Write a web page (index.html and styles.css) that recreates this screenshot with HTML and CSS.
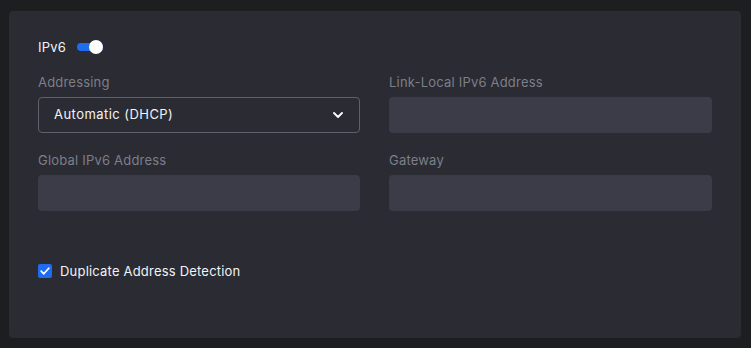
FILE: index.html
```html
<!DOCTYPE html>
<html lang="en">
<head>
  <meta charset="UTF-8">
  <title>IPv6 Settings</title>
  <link rel="stylesheet" href="styles.css">
</head>
<body>
  <div class="panel">
    <div class="switch-row">
      <span class="switch-label">IPv6</span>
      <span class="toggle on"><span class="knob"></span></span>
    </div>

    <div class="fields">
      <div class="field">
        <label>Addressing</label>
        <div class="select">
          <span class="select-value">Automatic (DHCP)</span>
          <svg class="chevron" width="10" height="6" viewBox="0 0 10 6">
            <path d="M1 1l4 4 4-4" fill="none" stroke="#fff" stroke-width="1.8" stroke-linecap="round" stroke-linejoin="round"/>
          </svg>
        </div>
      </div>
      <div class="field">
        <label>Link-Local IPv6 Address</label>
        <div class="input"></div>
      </div>
      <div class="field">
        <label>Global IPv6 Address</label>
        <div class="input"></div>
      </div>
      <div class="field">
        <label>Gateway</label>
        <div class="input"></div>
      </div>
    </div>

    <div class="check-row">
      <span class="checkbox">
        <svg width="10" height="8" viewBox="0 0 10 8">
          <path d="M1.2 4.2l2.6 2.6L8.8 1.2" fill="none" stroke="#fff" stroke-width="1.7" stroke-linecap="round" stroke-linejoin="round"/>
        </svg>
      </span>
      <span class="check-label">Duplicate Address Detection</span>
    </div>
  </div>
</body>
</html>
```

FILE: styles.css
```css
body {
  margin: 0;
  height: 348px;
  background-color: #1d1e20;
  font-family: 'Inter', sans-serif;
  font-size: 13px;
  letter-spacing: 0.2px;
  color: #f2f3f5;
  padding: 11px 10px 10px 9px;
  box-sizing: border-box;
}

.panel {
  background-color: #2a2b33;
  border-radius: 4px;
  height: 327px;
  width: 732px;
  box-sizing: border-box;
  padding: 26px 29px 0 29px;
}

.switch-row {
  display: flex;
  align-items: center;
  height: 20px;
  gap: 11px;
}

.toggle {
  position: relative;
  width: 26px;
  height: 8px;
  border-radius: 4px;
  background-color: #1f6cf0;
}

.toggle .knob {
  position: absolute;
  right: 0;
  top: -3px;
  width: 14px;
  height: 14px;
  border-radius: 50%;
  background-color: #fff;
}

.fields {
  display: grid;
  grid-template-columns: 322px 323px;
  column-gap: 29px;
  row-gap: 19px;
  margin-top: 17px;
}

.field label {
  display: block;
  line-height: 16px;
  color: #7d7f88;
  margin-bottom: 7px;
}

.select {
  height: 36px;
  box-sizing: border-box;
  border: 1px solid #5f6069;
  border-radius: 4px;
  display: flex;
  align-items: center;
  justify-content: space-between;
  padding: 0 16px 2px 15px;
  color: #f2f3f5;
}

.select-value {
  letter-spacing: 0.45px;
}

.chevron {
  margin-top: 1px;
}

.input {
  height: 36px;
  border-radius: 4px;
  background-color: #3b3c47;
}

.check-row {
  display: flex;
  align-items: center;
  gap: 8px;
  margin-top: 52px;
  height: 16px;
}

.checkbox {
  width: 14px;
  height: 14px;
  border-radius: 2px;
  background-color: #1f6cf0;
  display: flex;
  align-items: center;
  justify-content: center;
}
```
